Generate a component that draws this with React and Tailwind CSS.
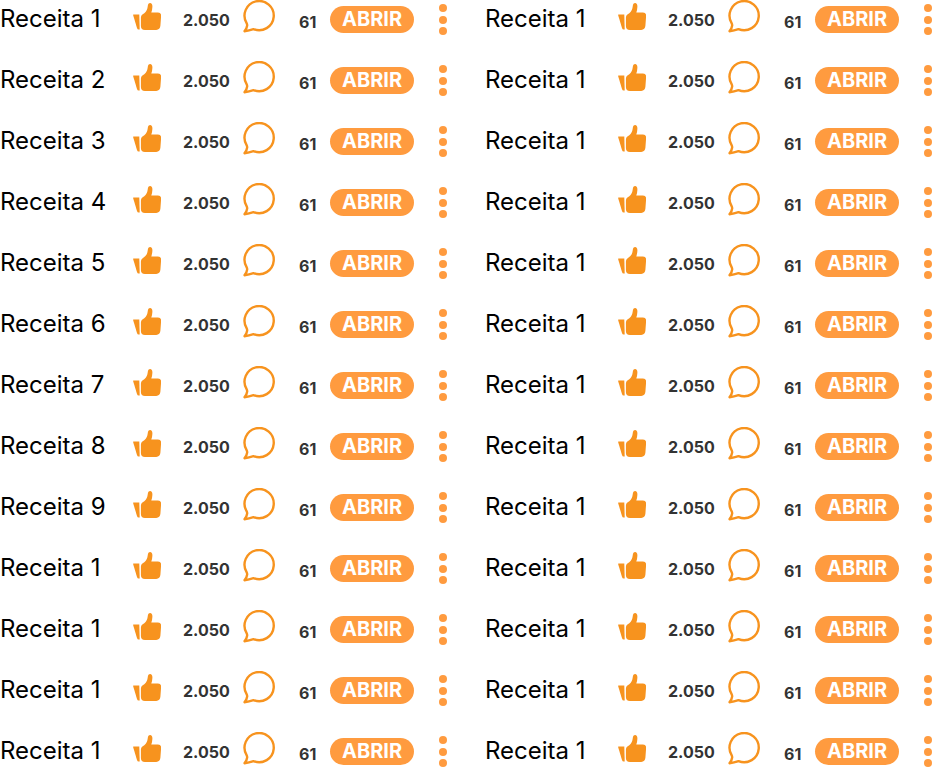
const firstColumn = [1, 2, 3, 4, 5, 6, 7, 8, 9, 1, 1, 1, 1];
const secondColumn = Array(13).fill(1);

function ThumbIcon() {
  return (
    <svg viewBox="0 0 28 27" className="mt-[3px] h-[27px] w-7" fill="#f7931e" aria-hidden="true">
      <path d="M.5 11.4H6.3L6.7 26.6H5.6Q4.5 26.6 4 25L.1 12Q0 11.4 .5 11.4Z" />
      <path d="M7.9 14.6Q7.9 12.6 9.4 11.6Q13.6 9 14.4 5.2L15 1.8Q15.4 0 17 0Q19.5 .3 19.4 3.8Q19.3 6.6 18.3 9.5H25Q28.3 9.7 28.1 13L27.4 22.8Q27 26.9 23.2 26.9H12Q7.9 26.9 7.9 23Z" />
    </svg>
  );
}

function BubbleIcon() {
  return (
    <svg
      viewBox="0 0 32 33"
      className="h-[33px] w-8"
      fill="none"
      stroke="#f7931e"
      strokeWidth="2.4"
      strokeLinejoin="round"
      aria-hidden="true"
    >
      <path d="M3.6 23.1A14.6 14.6 0 1 1 10.5 29.1Q6 30.6 1.5 31.2Q4 28 4.2 25.4Q4.2 24.2 3.6 23.1Z" />
    </svg>
  );
}

function Recipe({ number }) {
  return (
    <li className="grid h-[35px] grid-cols-[1fr_50px_60px_56px_31px_109px_8px] items-start">
      <span className="mt-1 text-2xl leading-[30px] whitespace-nowrap text-black">Receita {number}</span>
      <ThumbIcon />
      <span className="mt-2 text-base leading-6 font-bold">2.050</span>
      <BubbleIcon />
      <span className="mt-2.5 text-base leading-6 font-bold">61</span>
      <button
        type="button"
        className="mt-1.5 h-[27px] w-[84px] cursor-pointer rounded-full bg-[#ff9b3f] text-center text-xl leading-[27px] font-bold text-white"
      >
        ABRIR
      </button>
      <button type="button" aria-label="Mais opções" className="mt-1 h-[31px] w-2 cursor-pointer">
        <svg viewBox="0 0 8 31" className="block h-[31px] w-2" fill="#ff9b3f" aria-hidden="true">
          <circle cx="4" cy="4" r="4" />
          <circle cx="4" cy="16" r="4" />
          <circle cx="4" cy="27" r="4" />
        </svg>
      </button>
    </li>
  );
}

function RecipeList({ numbers }) {
  return (
    <ul className="flex flex-col gap-[26px]">
      {numbers.map((number, index) => (
        <Recipe key={index} number={number} />
      ))}
    </ul>
  );
}

export default function App() {
  return (
    <main className="grid grid-cols-2 gap-x-[38px] bg-white font-['Inter',sans-serif] text-[#333333]">
      <RecipeList numbers={firstColumn} />
      <RecipeList numbers={secondColumn} />
    </main>
  );
}
